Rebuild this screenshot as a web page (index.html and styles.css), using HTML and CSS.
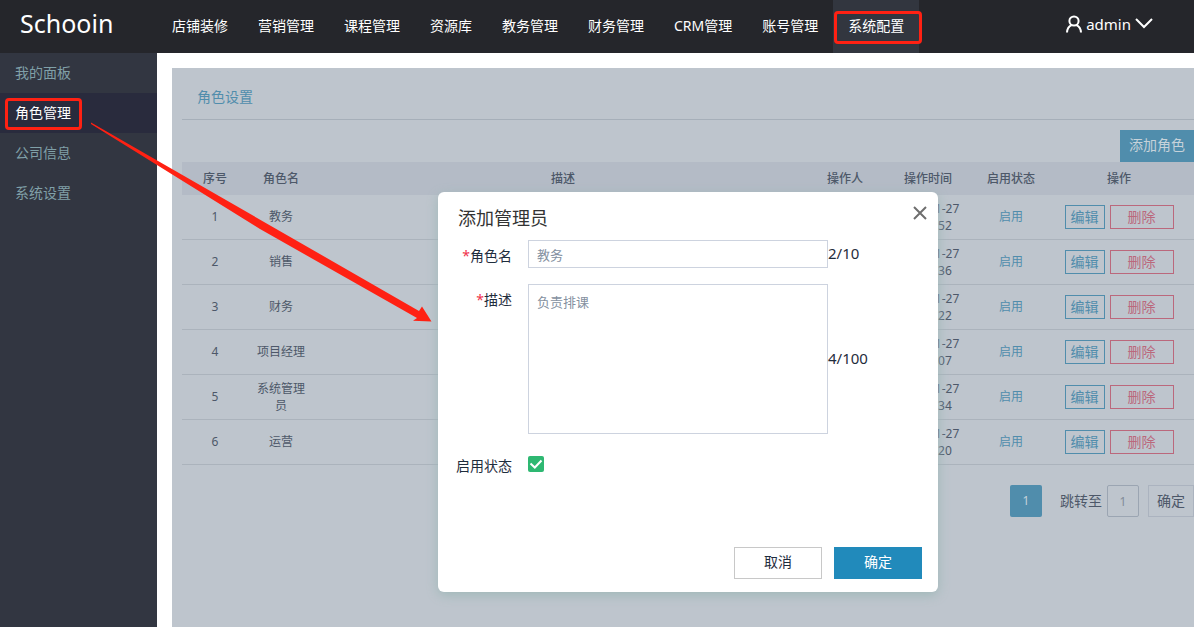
FILE: index.html
```html
<!DOCTYPE html>
<html lang="zh-CN">
<head>
<meta charset="utf-8">
<title>Schooin</title>
<link rel="stylesheet" href="styles.css">
</head>
<body>
<header class="topbar">
  <a class="logo" href="#">Schooin</a>
  <nav class="nav">
    <a href="#">店铺装修</a>
    <a href="#">营销管理</a>
    <a href="#">课程管理</a>
    <a href="#">资源库</a>
    <a href="#">教务管理</a>
    <a href="#">财务管理</a>
    <a href="#">CRM管理</a>
    <a href="#">账号管理</a>
    <a class="active" href="#">系统配置<span class="mark mark-nav"></span></a>
  </nav>
  <button class="user" type="button">
    <svg width="16" height="18" viewBox="0 0 16 18" fill="none" stroke="currentColor" stroke-width="2"><circle cx="8" cy="6" r="4.6"/><path d="M1 17.500c.2-4 2-6.300 4.600-7.400M15 17.500c-.2-4-2-6.300-4.600-7.400"/></svg>
    <span>admin</span>
    <svg width="18" height="11" viewBox="0 0 18 11" fill="none" stroke="currentColor" stroke-width="2"><path d="M1 1l8 8 8-8"/></svg>
  </button>
</header>
<div class="layout">
  <aside class="sidebar">
    <a href="#">我的面板</a>
    <a class="active" href="#">角色管理<span class="mark mark-side"></span></a>
    <a href="#">公司信息</a>
    <a href="#">系统设置</a>
  </aside>
  <main class="panel">
    <h1 class="panel-title">角色设置</h1>
    <div class="toolbar"><button class="add" type="button">添加角色</button></div>
    <table class="roles">
      <colgroup><col class="c-s"><col class="c-s"><col><col class="c-s"><col class="c-time"><col class="c-s"><col class="c-act"></colgroup>
      <thead>
        <tr><th>序号</th><th>角色名</th><th>描述</th><th>操作人</th><th>操作时间</th><th>启用状态</th><th>操作</th></tr>
      </thead>
      <tbody>
        <tr><td>1</td><td>教务</td><td></td><td></td><td class="time">2020-11-27 10:20:52</td><td class="state">启用</td><td class="ops"><div class="actions"><button class="edit" type="button">编辑</button><button class="del" type="button">删除</button></div></td></tr>
        <tr><td>2</td><td>销售</td><td></td><td></td><td class="time">2020-11-27 10:20:36</td><td class="state">启用</td><td class="ops"><div class="actions"><button class="edit" type="button">编辑</button><button class="del" type="button">删除</button></div></td></tr>
        <tr><td>3</td><td>财务</td><td></td><td></td><td class="time">2020-11-27 10:20:22</td><td class="state">启用</td><td class="ops"><div class="actions"><button class="edit" type="button">编辑</button><button class="del" type="button">删除</button></div></td></tr>
        <tr><td>4</td><td>项目经理</td><td></td><td></td><td class="time">2020-11-27 10:20:07</td><td class="state">启用</td><td class="ops"><div class="actions"><button class="edit" type="button">编辑</button><button class="del" type="button">删除</button></div></td></tr>
        <tr><td>5</td><td>系统管理员</td><td></td><td></td><td class="time">2020-11-27 10:19:34</td><td class="state">启用</td><td class="ops"><div class="actions"><button class="edit" type="button">编辑</button><button class="del" type="button">删除</button></div></td></tr>
        <tr><td>6</td><td>运营</td><td></td><td></td><td class="time">2020-11-27 10:19:20</td><td class="state">启用</td><td class="ops"><div class="actions"><button class="edit" type="button">编辑</button><button class="del" type="button">删除</button></div></td></tr>
      </tbody>
    </table>
    <div class="pager">
      <button class="page" type="button">1</button>
      <label for="jump">跳转至</label>
      <input id="jump" class="jump" type="text" value="1">
      <button class="go" type="button">确定</button>
    </div>
    <div class="overlay">
      <form class="dialog" role="dialog" aria-labelledby="dlg-title">
        <div class="dialog-head">
          <h2 id="dlg-title">添加管理员</h2>
          <button class="close" type="button" aria-label="关闭"><svg width="14" height="14" viewBox="0 0 14 14" fill="none" stroke="currentColor" stroke-width="2"><path d="M1 1l12 12M13 1L1 13"/></svg></button>
        </div>
        <div class="field">
          <label for="name"><i>*</i>角色名</label>
          <input id="name" class="text" type="text" value="教务">
          <span class="count">2/10</span>
        </div>
        <div class="field">
          <label for="desc"><i>*</i>描述</label>
          <textarea id="desc" class="text area">负责排课</textarea>
          <span class="count">4/100</span>
        </div>
        <div class="field">
          <label for="enabled">启用状态</label>
          <span class="check"><input id="enabled" type="checkbox" checked><svg width="16" height="16" viewBox="0 0 16 16" fill="none" stroke="#fff" stroke-width="2"><path d="M2.500 7.500l4.300 4L13.500 4.500"/></svg></span>
        </div>
        <div class="dialog-foot">
          <button class="cancel" type="button">取消</button>
          <button class="ok" type="submit">确定</button>
        </div>
      </form>
    </div>
  </main>
</div>
<svg class="arrow" width="440" height="330" viewBox="0 0 440 330" fill="#ff2113"><path d="M91 122.500L419 311l3-4.500 9.500 15L413 320.700l4-2.700L260 229 91 124z"/></svg>
</body>
</html>
```

FILE: styles.css
```css
* { box-sizing: border-box; }
body {
  margin: 0;
  position: relative;
  min-height: 100vh;
  display: flex;
  flex-direction: column;
  overflow: hidden;
  background: #fff;
  color: #1f2d3d;
  font: 14px/20px "Noto Sans", "Noto Sans CJK SC", sans-serif;
}
a { color: inherit; text-decoration: none; }
button, input, textarea { font: inherit; color: inherit; margin: 0; padding: 0; border-radius: 0; }
button { background: none; border: 0; cursor: pointer; }

.topbar { display: flex; height: 53px; background: #25262b; color: #fff; }
.logo { width: 157px; padding: 6px 0 0 20px; font-size: 25px; line-height: 34px; }
.nav { display: flex; }
.nav a { position: relative; padding: 16px 15px; white-space: nowrap; }
.nav .active { background: #32363f; }
.user { display: flex; align-items: center; gap: 4px; margin: 0 41px 6px auto; font-size: 15px; }

/* Highlight frames over menu entries */
.mark { position: absolute; border: 3px solid #ff2113; border-radius: 4px; }
.mark-nav { inset: 11px -3px 9px 1px; }
.mark-side { top: 5px; left: 5px; width: 77px; height: 32px; }

.layout { flex: 1; display: flex; }
.sidebar { width: 157px; flex: none; background: #323641; color: #80a0a8; }
.sidebar a { display: block; position: relative; padding: 10px 15px; }
.sidebar .active { background: #292b3d; color: #fff; }

.panel { position: relative; flex: 1; margin: 15px 0 0 15px; padding-left: 10px; background: #bec5cd; color: #4d5869; }
.panel-title { margin: 0; padding: 19px 15px 12px; border-bottom: 1px solid #a6afb9; color: #508dac; font-size: 14px; font-weight: 400; }
.toolbar { display: flex; justify-content: flex-end; padding-top: 10px; }
.add { padding: 5px 9px 7px; background: #508dac; color: #c6d2da; }

.roles { width: 100%; table-layout: fixed; border-collapse: separate; border-spacing: 0; font-size: 12px; line-height: 17px; text-align: center; }
.c-s { width: 66px; }
.c-time { width: 100px; }
.c-act { width: 150px; }
.roles th { height: 33px; padding: 0; background: #b4bbc6; font-weight: 500; }
.roles td { height: 45px; padding: 0 6px 1px; border-bottom: 1px solid #abb3bc; }
.roles td.time { padding: 0 12px; }
.roles .state { color: #508dac; }
.roles .ops { padding: 0; }
.actions { display: flex; justify-content: center; gap: 5px; font-size: 14px; line-height: 20px; }
.edit, .del { height: 24px; border: 1px solid; }
.edit { width: 40px; color: #508dac; }
.del { width: 64px; color: #bb687c; }

.pager { display: flex; align-items: center; justify-content: flex-end; padding-top: 20px; }
.page { width: 32px; height: 32px; margin-right: 18px; border-radius: 2px; background: #508dac; color: #c6d2da; font-size: 12px; }
.jump { width: 32px; height: 32px; margin: 0 9px 0 5px; border: 1px solid #9ba5b2; border-radius: 2px; background: none; color: #828c99; font-size: 12px; text-align: center; }
.go { height: 32px; padding: 0 8px; border: 1px solid #abb3bf; }

.overlay { position: absolute; inset: 0 0 0 10px; display: flex; justify-content: center; align-items: flex-start; padding-top: 124px; }
.dialog { width: 500px; padding-bottom: 13px; border-radius: 6px; background: #fff; color: #1f2d3d; box-shadow: 0 3px 12px #9fb8b8; }
.dialog-head { display: flex; justify-content: space-between; align-items: flex-start; padding: 14px 11px 10px 20px; }
.dialog-head h2 { margin: 0; color: #333; font-size: 18px; line-height: 24px; font-weight: 400; }
.close { height: 14px; color: #6e6e6e; display: flex; }
.field { display: flex; align-items: flex-start; margin-bottom: 16px; }
.field label { width: 90px; padding: 6px 16px 0 0; text-align: right; }
.field i { color: #f0324b; font-style: normal; }
.text { width: 300px; height: 28px; padding: 0 8px; border: 1px solid #cdd3df; background: #fff; color: #84909f; font-size: 13px; outline: 0; }
.area { height: 150px; padding: 7px 8px; resize: none; }
.count { align-self: center; padding-bottom: 2px; font-size: 15px; }
.check { position: relative; width: 16px; height: 16px; margin-top: 6px; }
.check input { display: block; width: 16px; height: 16px; appearance: none; border-radius: 2px; background: #2eb872; }
.check svg { position: absolute; inset: 0; pointer-events: none; }
.dialog-foot { display: flex; justify-content: flex-end; gap: 12px; padding: 55px 16px 0; }
.cancel, .ok { width: 88px; height: 32px; padding-bottom: 2px; }
.cancel { border: 1px solid #c8c8c8; }
.ok { background: #218abb; color: #fff; }

.arrow { position: absolute; top: 0; left: 0; pointer-events: none; }
```
